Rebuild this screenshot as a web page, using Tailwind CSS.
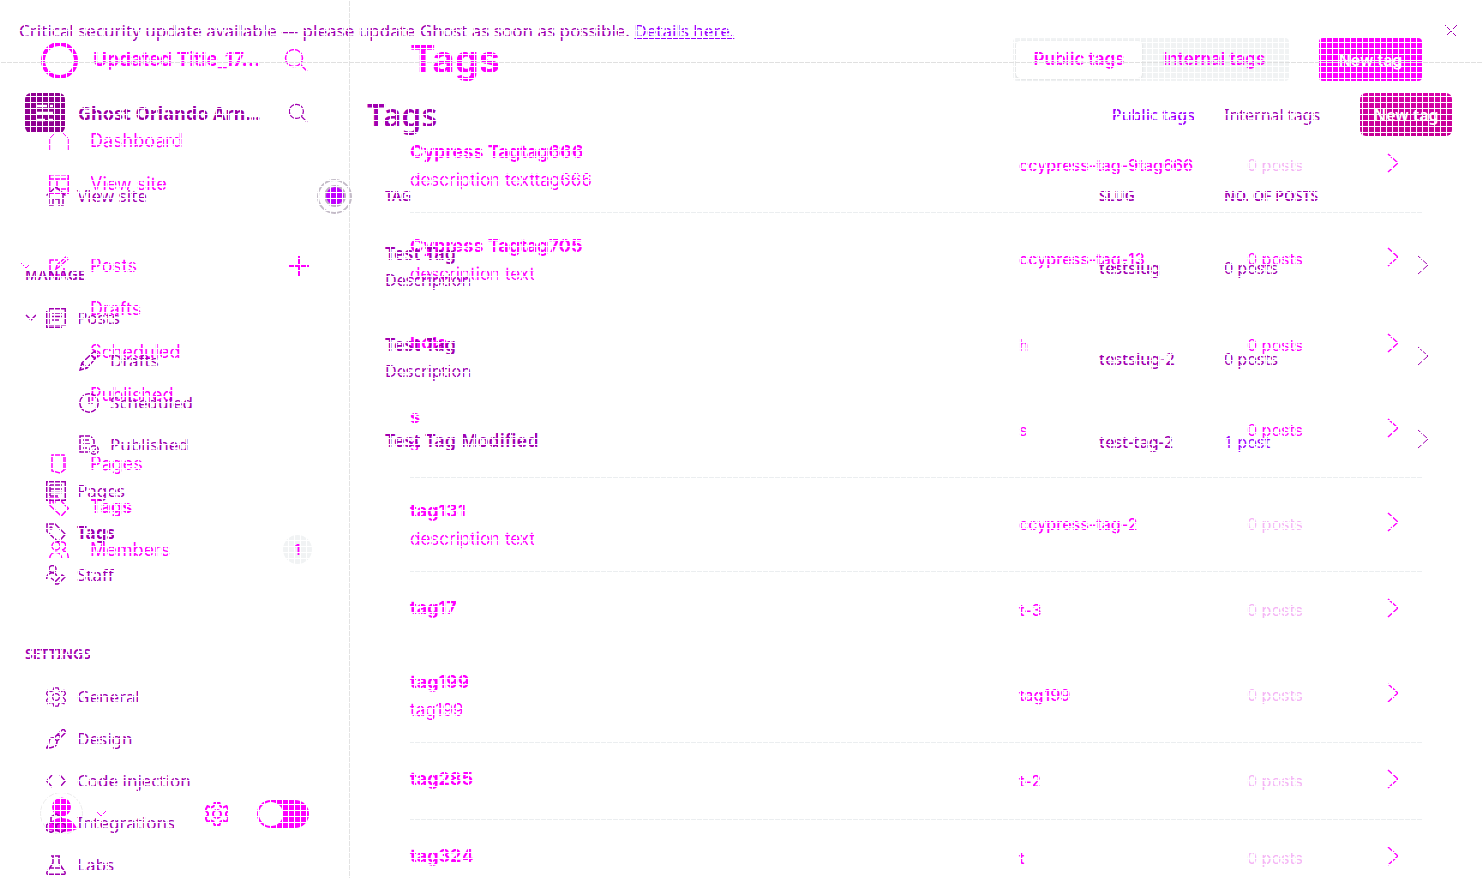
<!DOCTYPE html>
<html lang="en">
<head>
<meta charset="utf-8">
<title>Tags</title>
<script src="https://cdn.jsdelivr.net/npm/@tailwindcss/browser@4"></script>
</head>
<body class="bg-white">
<svg class="hidden" aria-hidden="true">
  <symbol id="search" viewBox="0 0 24 24"><circle cx="10" cy="10" r="8.5"/><path d="M16.5 16.5 23 23"/></symbol>
  <symbol id="chev-r" viewBox="0 0 12 20"><path d="M1 1l10 9-10 9"/></symbol>
  <symbol id="chev-d" viewBox="0 0 12 8"><path d="M1 1l5 5 5-5"/></symbol>
  <symbol id="home" viewBox="0 0 20 20"><path d="M.7 19.3V7.5L7 1h6l6.300 6.500v11.800"/></symbol>
  <symbol id="site" viewBox="0 0 20 20"><path d="M.7.7h18.600v18.600H.7zM.7 5h18.600M8 5v10h11"/></symbol>
  <symbol id="house" viewBox="0 0 20 20"><path d="M.5 9.500 10 1l9.500 8.500M3 8v11h4v-6h6v6h4V8"/></symbol>
  <symbol id="edit" viewBox="0 0 20 20"><path d="M9 4H1v15h14v-7M7 13l1-4 9-8 2 2-9 8z"/></symbol>
  <symbol id="posts" viewBox="0 0 20 20"><path d="M3 .7h16.300v16H3zM.7 3v16.300H16M6 5h10M6 8.500h10M6 12h7"/></symbol>
  <symbol id="pencil" viewBox="0 0 20 20"><path d="M1 19l2-7L14 1.500c2-2 6 2 4 4L8 17zM3 12l5 5M12 4l4 4"/></symbol>
  <symbol id="clock" viewBox="0 0 20 20"><circle cx="10" cy="10" r="9.200"/><path d="M10 4v6h4"/></symbol>
  <symbol id="pub" viewBox="0 0 20 20"><path d="M9 17H1V1h10l4 4v5M4 5h6M4 9h7M4 13h4"/><circle cx="15" cy="15" r="4.200"/><path d="m13 15 1.500 1.500 3-3"/></symbol>
  <symbol id="page" viewBox="0 0 20 20"><path d="M3 1h12v15l-4 3-8-2zM17 3v13"/></symbol>
  <symbol id="pages" viewBox="0 0 20 20"><path d="M.7.7h18.600v18.600H.7zM4 4h12M4 8h12M4 11.500h12M4 15h8M4 4v11"/></symbol>
  <symbol id="tag" viewBox="0 0 20 20"><path d="M1 1h8l10.300 10.300-7 7.700L1 8.500z"/><circle cx="5" cy="5" r="1"/></symbol>
  <symbol id="members" viewBox="0 0 20 20"><circle cx="7" cy="6" r="4"/><path d="M.7 19c0-9 12-9 12 0M12 2c6-1 6 7 1 8M14 11c4 0 5.300 4 5.300 8"/></symbol>
  <symbol id="staff" viewBox="0 0 20 20"><circle cx="6.500" cy="4" r="3.500"/><path d="M.7 14c0-7 8-8 10-3M9 17l7-7 3 2-7 7H9zM5 13l4 3"/></symbol>
  <symbol id="gear" viewBox="0 0 24 24"><circle cx="12" cy="12" r="4"/><path d="M9.500 1h5l1 3.500 2.500 1L21.500 4l2 4-2.500 3v2l2.500 3-2 4-3.500-1.500-2.500 1-1 3.500h-5l-1-3.500-2.500-1L2.500 20l-2-4L3 13v-2L.5 8l2-4L6 5.500l2.500-1z"/></symbol>
  <symbol id="brush" viewBox="0 0 20 20"><path d="M8 9 16 1c2-1.500 4 1 3 3l-8 8zM8 9c-3-1-5 1-5 4 0 2-1 4-2.500 6 5 0 11-1 10.500-7zM12 5l3 3"/></symbol>
  <symbol id="code" viewBox="0 0 20 20"><path d="M6 4 .7 10 6 16M14 4l5.300 6L14 16"/></symbol>
  <symbol id="blocks" viewBox="0 0 20 20"><path d="M10 1l5 3v5l-5 3-5-3V4zM5 9l4.500 3v5L5 19.500.7 17v-5zM15 9l4.300 3v5L15 19.500 10.500 17v-5z"/></symbol>
  <symbol id="flask" viewBox="0 0 20 20"><path d="M5 1h10M7 1v7L1 17c-.5 1.500 0 2.300 1 2.300h16c1 0 1.500-.8 1-2.300l-6-9V1M4 13h12"/></symbol>
</svg>
<div class="relative h-screen overflow-hidden">

  <!-- Site "Updated Title_17" -->
  <div class="absolute inset-0 flex font-[Inter,sans-serif] text-[#f0f]">
    <aside class="flex w-[350px] shrink-0 flex-col border-r border-[#e3e3e3] pt-[38px]">
      <div class="flex h-11 items-center pr-[41px] pl-[41px]">
        <span class="size-[37px] rounded-full border-4 border-[#f0f]"></span>
        <span class="ml-[15px] flex-1 text-[19px] font-bold">Updated Title_17...</span>
        <button aria-label="Search"><svg class="size-6 fill-none stroke-current stroke-[1.500]"><use href="#search"/></svg></button>
      </div>
      <nav class="mt-[37px] flex flex-col pr-[37px] pl-5 text-lg *:flex *:h-[43px] *:items-center">
        <a href="#"><svg class="mr-[21px] ml-[29px] size-5 fill-none stroke-current"><use href="#home"/></svg>Dashboard</a>
        <a href="#"><svg class="mr-[21px] ml-[29px] size-5 fill-none stroke-current stroke-[1.500]"><use href="#site"/></svg>View site</a>
        <a href="#" class="mt-[39px]"><svg class="h-2 w-3 fill-none stroke-current"><use href="#chev-d"/></svg><svg class="mr-[21px] ml-[17px] size-5 fill-none stroke-current stroke-[1.500]"><use href="#edit"/></svg>Posts<span class="relative mr-[3px] ml-auto size-5 before:absolute before:top-[9px] before:h-0.5 before:w-5 before:bg-[#f0f] after:absolute after:left-[9px] after:h-5 after:w-0.5 after:bg-[#f0f]"></span></a>
        <a href="#" class="pl-[70px]">Drafts</a>
        <a href="#" class="pl-[70px]">Scheduled</a>
        <a href="#" class="pl-[70px]">Published</a>
        <a href="#" class="mt-[26px]"><svg class="mr-[21px] ml-[29px] size-5 fill-none stroke-current stroke-[1.500]"><use href="#page"/></svg>Pages</a>
        <a href="#" class="font-semibold"><svg class="mr-[21px] ml-[29px] size-5 fill-none stroke-current stroke-[1.500]"><use href="#tag"/></svg>Tags</a>
        <a href="#"><svg class="mr-[21px] ml-[29px] size-5 fill-none stroke-current stroke-[1.500]"><use href="#members"/></svg>Members<span class="ml-auto flex size-[29px] items-center justify-center rounded-full bg-[#f1f3f4] text-sm font-semibold">1</span></a>
      </nav>
      <div class="mt-auto mb-[43px] flex items-center pr-10 pl-10">
        <svg class="size-[43px]" viewBox="0 0 43 43"><circle cx="21.500" cy="21.500" r="21" fill="none" stroke="#ececec"/><circle cx="21.500" cy="15" r="9.500" fill="#f0f"/><path d="M7 37c3-8 8-11 14.500-11S34 29 37 37c-8 4-22 4-30 0z" fill="#f0f"/></svg>
        <svg class="ml-3 h-2 w-3 fill-none stroke-current"><use href="#chev-d"/></svg>
        <button aria-label="Settings" class="ml-auto"><svg class="size-6 fill-none stroke-current stroke-2"><use href="#gear"/></svg></button>
        <label class="ml-7 flex h-7 w-[52px] items-center rounded-full bg-[#f0f] px-0.5"><input type="checkbox" aria-label="Dark mode" class="size-6 appearance-none rounded-full bg-white"></label>
      </div>
    </aside>
    <main class="min-w-0 flex-1 pr-[61px] pl-[60px]">
      <header class="flex items-center pt-[38px]">
        <h1 class="flex-1 text-[38px] leading-[43px] font-bold">Tags</h1>
        <div class="flex h-[43px] rounded bg-[#f1f3f4] p-[3px] text-[17px] font-semibold">
          <button class="w-[126px] rounded bg-white shadow">Public tags</button>
          <button class="w-[144px] grow">Internal tags</button>
        </div>
        <button class="ml-[30px] h-[43px] w-[103px] rounded bg-[#f0f] text-base font-semibold text-white">New tag</button>
      </header>
      <table class="mt-[37px] w-full table-fixed">
        <colgroup><col><col class="w-[228px]"><col class="w-[140px]"><col class="w-[35px]"></colgroup>
        <tbody class="text-base [&_b]:mb-0.5 [&_b]:block [&_b]:text-lg [&_b]:leading-7 [&_b]:font-bold [&_td]:p-0 [&_td:first-child]:text-[17px] [&_td:first-child]:leading-6">
          <tr class="h-[94px] border-b border-[#ebeef0]"><td><b>Cypress Tagtag666</b>description texttag666</td><td class="font-medium">ccypress-tag-9tag666</td><td class="text-[#f5b5f5]">0 posts</td><td><svg class="mb-1 h-5 w-3 fill-none stroke-current stroke-[1.500]"><use href="#chev-r"/></svg></td></tr>
          <tr class="h-[94px] border-b border-[#ebeef0]"><td><b>Cypress Tagtag705</b>description text</td><td class="font-medium">ccypress-tag-13</td><td>0 posts</td><td><svg class="mb-1 h-5 w-3 fill-none stroke-current stroke-[1.500]"><use href="#chev-r"/></svg></td></tr>
          <tr class="h-[77px]"><td class="pb-0.5!"><b>hola</b></td><td>h</td><td>0 posts</td><td><svg class="mb-1 h-5 w-3 fill-none stroke-current stroke-[1.500]"><use href="#chev-r"/></svg></td></tr>
          <tr class="h-[94px] border-b border-[#ebeef0]"><td><b>s</b>s</td><td>s</td><td>0 posts</td><td><svg class="mb-1 h-5 w-3 fill-none stroke-current stroke-[1.500]"><use href="#chev-r"/></svg></td></tr>
          <tr class="h-[94px] border-b border-[#ebeef0]"><td><b>tag131</b>description text</td><td class="font-medium">ccypress-tag-2</td><td class="text-[#f5b5f5]">0 posts</td><td><svg class="mb-1 h-5 w-3 fill-none stroke-current stroke-[1.500]"><use href="#chev-r"/></svg></td></tr>
          <tr class="h-[77px] border-b border-[#ebeef0]"><td class="pb-0.5!"><b>tag17</b></td><td class="font-medium">t-3</td><td class="text-[#f5b5f5]">0 posts</td><td><svg class="mb-1 h-5 w-3 fill-none stroke-current stroke-[1.500]"><use href="#chev-r"/></svg></td></tr>
          <tr class="h-[94px] border-b border-[#ebeef0]"><td><b>tag199</b>tag199</td><td class="font-medium">tag199</td><td class="text-[#f5b5f5]">0 posts</td><td><svg class="mb-1 h-5 w-3 fill-none stroke-current stroke-[1.500]"><use href="#chev-r"/></svg></td></tr>
          <tr class="h-[77px] border-b border-[#ebeef0]"><td class="pb-0.5!"><b>tag285</b></td><td class="font-medium">t-2</td><td class="text-[#f5b5f5]">0 posts</td><td><svg class="mb-1 h-5 w-3 fill-none stroke-current stroke-[1.500]"><use href="#chev-r"/></svg></td></tr>
          <tr class="h-[77px]"><td class="pb-0.5!"><b>tag324</b></td><td class="font-medium">t</td><td class="text-[#f5b5f5]">0 posts</td><td><svg class="mb-1 h-5 w-3 fill-none stroke-current stroke-[1.500]"><use href="#chev-r"/></svg></td></tr>
        </tbody>
      </table>
    </main>
  </div>

  <!-- Site "Ghost Orlando Arn..." -->
  <div class="absolute inset-0 flex flex-col font-['Noto_Sans',sans-serif] text-[#a000b0]">
    <div class="flex h-[63px] shrink-0 items-center justify-between border-b border-[#e0e0e0] pr-6 pl-[19px] text-[17px]">
      <p>Critical security update available — please update Ghost as soon as possible. <a href="#" class="text-[#90f] underline">Details here.</a></p>
      <button aria-label="Close"><svg class="size-4 fill-none stroke-current" viewBox="0 0 16 16"><path d="M2 2l12 12M14 2 2 14"/></svg></button>
    </div>
    <div class="flex flex-1">
      <aside class="w-[350px] shrink-0 pt-[30px]">
        <div class="flex h-10 items-center pr-[42px] pl-[25px]">
          <svg class="size-10" viewBox="0 0 40 40"><rect width="40" height="40" rx="6" fill="#8f0090"/><path d="M12 13h10M25 13h3M12 20h16M12 27h8M23 27h5" stroke="#fff" stroke-width="2.500"/></svg>
          <span class="ml-[13px] flex-1 text-lg font-bold text-[#9a00a4]">Ghost Orlando Arn...</span>
          <button aria-label="Search"><svg class="size-5 fill-none stroke-current stroke-[1.500]"><use href="#search"/></svg></button>
        </div>
        <nav class="mt-[42px] flex flex-col text-[17px] [&_a]:flex [&_a]:h-[42px] [&_a]:items-center [&_a]:pl-[46px] [&_h2]:flex [&_h2]:h-[42px] [&_h2]:items-center [&_h2]:pl-[25px] [&_h2]:text-sm [&_h2]:font-semibold [&_svg]:mr-[11px] [&_svg]:size-5 [&_svg]:fill-none [&_svg]:stroke-current [&_svg]:stroke-[1.500]">
          <a href="#"><svg><use href="#house"/></svg>View site<span class="-mr-0.5 ml-auto flex size-[35px] items-center justify-center rounded-full border-2 border-[#c4bcc8]"><i class="size-[22px] rounded-full border-2 border-[#c0b0c4] bg-[#c000ff]"></i></span></a>
          <h2 class="mt-[37px]">MANAGE</h2>
          <div class="relative mt-px"><svg class="absolute top-[17px] left-[25px] h-2! w-3!"><use href="#chev-d"/></svg><a href="#"><svg><use href="#posts"/></svg>Posts</a></div>
          <a href="#" class="mt-px pl-[79px]!"><svg><use href="#pencil"/></svg>Drafts</a>
          <a href="#" class="pl-[79px]!"><svg><use href="#clock"/></svg>Scheduled</a>
          <a href="#" class="pl-[79px]!"><svg><use href="#pub"/></svg>Published</a>
          <a href="#" class="mt-1"><svg><use href="#pages"/></svg>Pages</a>
          <a href="#" class="font-bold"><svg><use href="#tag"/></svg>Tags</a>
          <a href="#"><svg><use href="#staff"/></svg>Staff</a>
          <h2 class="mt-[37px]">SETTINGS</h2>
          <a href="#" class="mt-px"><svg><use href="#gear"/></svg>General</a>
          <a href="#"><svg><use href="#brush"/></svg>Design</a>
          <a href="#"><svg><use href="#code"/></svg>Code injection</a>
          <a href="#"><svg><use href="#blocks"/></svg>Integrations</a>
          <a href="#"><svg><use href="#flask"/></svg>Labs</a>
        </nav>
      </aside>
      <main class="min-w-0 flex-1 pr-[31px] pl-[17px]">
        <header class="flex items-center pt-[30px] text-base">
          <h1 class="flex-1 text-[32px] leading-[43px] font-semibold">Tags</h1>
          <button class="mr-[29px] font-medium text-[#a000ff]">Public tags</button>
          <button class="w-[136px] text-left">Internal tags</button>
          <button class="h-[43px] w-[92px] rounded-md bg-linear-to-b from-[#d800a8] to-[#c40094] font-semibold text-white">New tag</button>
        </header>
        <table class="mt-[34px] w-full table-fixed text-left">
          <colgroup><col><col class="w-[125px]"><col class="w-[193px]"><col class="w-[35px]"></colgroup>
          <thead class="text-sm"><tr class="h-[52px]"><th class="p-0 pl-[18px] font-semibold">TAG</th><th class="p-0 font-semibold">SLUG</th><th class="p-0 font-semibold">NO. OF POSTS</th><th class="p-0"></th></tr></thead>
          <tbody class="[&_b]:mb-px [&_b]:block [&_b]:text-lg [&_b]:leading-7 [&_b]:font-semibold [&_td]:p-0 [&_td:first-child]:pb-1 [&_td:first-child]:pl-[18px]">
            <tr class="h-[91px]"><td><b>Test Tag</b>Description</td><td class="font-medium">testslug</td><td>0 posts</td><td><svg class="mb-1.5 h-5 w-3 fill-none stroke-current"><use href="#chev-r"/></svg></td></tr>
            <tr class="h-[91px]"><td><b>Test Tag</b>Description</td><td class="font-medium">testslug-2</td><td>0 posts</td><td><svg class="mb-1.5 h-5 w-3 fill-none stroke-current"><use href="#chev-r"/></svg></td></tr>
            <tr class="h-[76px]"><td><b>Test Tag Modified</b></td><td class="font-medium">test-tag-2</td><td class="text-[#a000ff]">1 post</td><td><svg class="mb-1.5 h-5 w-3 fill-none stroke-current"><use href="#chev-r"/></svg></td></tr>
          </tbody>
        </table>
      </main>
    </div>
  </div>

  <!-- White 6px mesh laid over both screens -->
  <div class="pointer-events-none absolute inset-0 bg-[linear-gradient(to_right,#fff_1px,transparent_1px),linear-gradient(to_bottom,#fff_1px,transparent_1px)] bg-[size:6px_6px]"></div>
</div>
</body>
</html>
